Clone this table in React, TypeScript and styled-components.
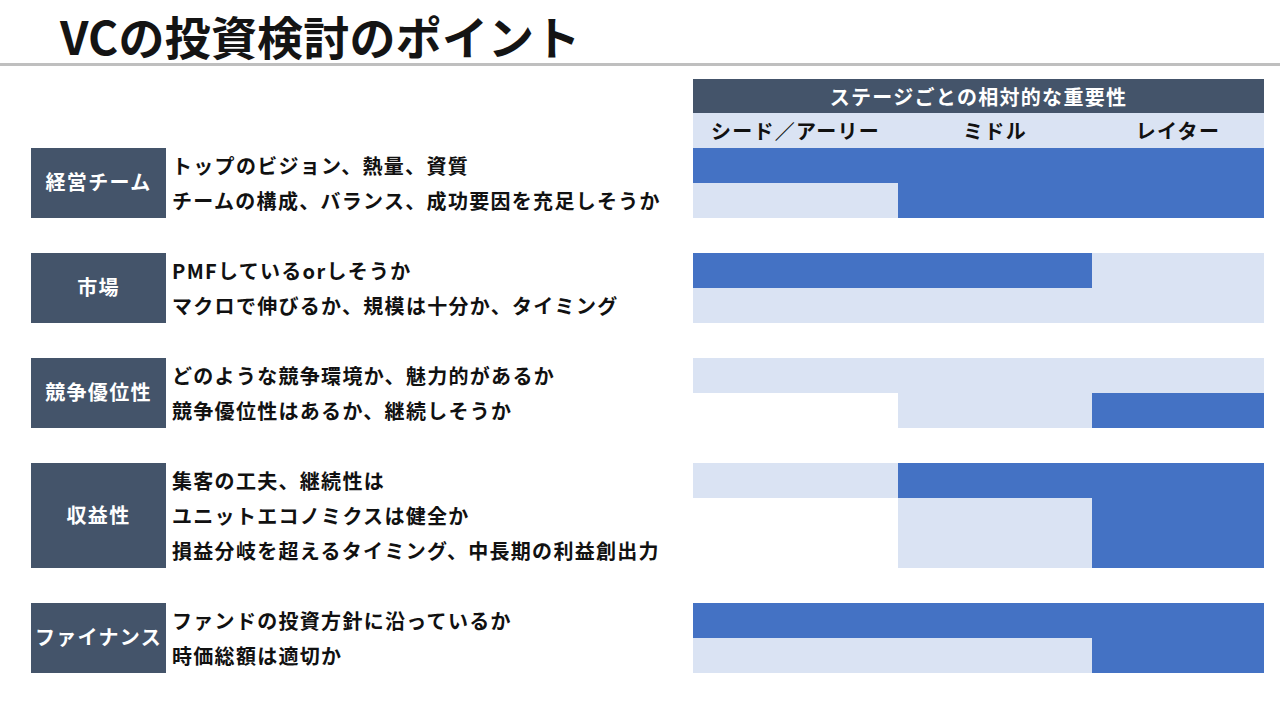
import React from "react";
import styled, { createGlobalStyle } from "styled-components";

const GlobalStyle = createGlobalStyle`
  html, body {
    margin: 0;
    padding: 0;
    background: #ffffff;
  }
  body {
    width: 1280px;
    height: 720px;
    overflow: hidden;
    font-family: "Noto Sans CJK JP", "Noto Sans", sans-serif;
    color: #111111;
  }
`;

const Page = styled.div`
  width: 1280px;
  height: 720px;
  display: flex;
  flex-direction: column;
`;

const TitleBar = styled.header`
  box-sizing: border-box;
  border-bottom: 3px solid #bfbfbf;
  height: 66px;
  display: flex;
  align-items: flex-end;
  padding: 0 0 2px 60px;
`;

const Title = styled.h1`
  margin: 0;
  font-size: 46px;
  line-height: 52px;
  font-weight: 700;
  letter-spacing: 0.2px;
  color: #141414;
`;

const Body = styled.main`
  display: flex;
  flex-direction: column;
  gap: 35px;
  padding: 13px 16px 0 31px;
`;

const Top = styled.section`
  display: grid;
  grid-template-columns: 662px 571px;
`;

const TableHead = styled.div`
  grid-column: 2;
  display: grid;
  grid-template-columns: 205px 194px 172px;
`;

const HeadTitle = styled.div`
  grid-column: 1 / -1;
  height: 34px;
  background: #44546a;
  color: #ffffff;
  display: flex;
  align-items: center;
  justify-content: center;
  font-size: 20px;
  font-weight: 700;
  letter-spacing: 1.3px;
`;

const StageCell = styled.div`
  height: 35px;
  background: #dae3f3;
  display: flex;
  align-items: center;
  justify-content: center;
  font-size: 20px;
  font-weight: 700;
  letter-spacing: 1.3px;
  color: #111111;
`;

const Group = styled.section<{ $rows: number }>`
  display: grid;
  grid-template-columns: 135px 527px 571px;
  grid-template-rows: repeat(${(p) => p.$rows}, 35px);
`;

const Label = styled.div<{ $rows: number }>`
  grid-column: 1;
  grid-row: 1 / span ${(p) => p.$rows};
  background: #44546a;
  color: #ffffff;
  display: flex;
  align-items: center;
  justify-content: center;
  padding-bottom: 3px;
  font-size: 20px;
  font-weight: 700;
  letter-spacing: 1.3px;
  white-space: nowrap;
`;

const Point = styled.div<{ $row: number }>`
  grid-column: 2;
  grid-row: ${(p) => p.$row};
  display: flex;
  align-items: center;
  padding-left: 6px;
  font-size: 20px;
  font-weight: 700;
  letter-spacing: 1.3px;
  white-space: nowrap;
  color: #111111;
`;

const BarRow = styled.div<{ $row: number }>`
  grid-column: 3;
  grid-row: ${(p) => p.$row};
  display: grid;
  grid-template-columns: 205px 194px 172px;
`;

type Level = "high" | "mid" | "none";

const levelColor: Record<Level, string> = {
  high: "#4472c4",
  mid: "#dae3f3",
  none: "transparent",
};

const Cell = styled.div<{ $level: Level }>`
  background: ${(p) => levelColor[p.$level]};
`;

type Item = { text: string; levels: Level[] };
type GroupData = { label: string; items: Item[] };

const groups: GroupData[] = [
  {
    label: "経営チーム",
    items: [
      { text: "トップのビジョン、熱量、資質", levels: ["high", "high", "high"] },
      { text: "チームの構成、バランス、成功要因を充足しそうか", levels: ["mid", "high", "high"] },
    ],
  },
  {
    label: "市場",
    items: [
      { text: "PMFしているorしそうか", levels: ["high", "high", "mid"] },
      { text: "マクロで伸びるか、規模は十分か、タイミング", levels: ["mid", "mid", "mid"] },
    ],
  },
  {
    label: "競争優位性",
    items: [
      { text: "どのような競争環境か、魅力的があるか", levels: ["mid", "mid", "mid"] },
      { text: "競争優位性はあるか、継続しそうか", levels: ["none", "mid", "high"] },
    ],
  },
  {
    label: "収益性",
    items: [
      { text: "集客の工夫、継続性は", levels: ["mid", "high", "high"] },
      { text: "ユニットエコノミクスは健全か", levels: ["none", "mid", "high"] },
      { text: "損益分岐を超えるタイミング、中長期の利益創出力", levels: ["none", "mid", "high"] },
    ],
  },
  {
    label: "ファイナンス",
    items: [
      { text: "ファンドの投資方針に沿っているか", levels: ["high", "high", "high"] },
      { text: "時価総額は適切か", levels: ["mid", "mid", "high"] },
    ],
  },
];

const stages = ["シード／アーリー", "ミドル", "レイター"];

function GroupBlock({ g }: { g: GroupData }) {
  return (
    <Group $rows={g.items.length}>
      <Label $rows={g.items.length}>{g.label}</Label>
      {g.items.map((it, i) => (
        <React.Fragment key={it.text}>
          <Point $row={i + 1}>{it.text}</Point>
          <BarRow $row={i + 1}>
            {it.levels.map((lv, j) => (
              <Cell key={j} $level={lv} />
            ))}
          </BarRow>
        </React.Fragment>
      ))}
    </Group>
  );
}

export default function App() {
  return (
    <Page>
      <GlobalStyle />
      <TitleBar>
        <Title>VCの投資検討のポイント</Title>
      </TitleBar>
      <Body>
        <div>
          <Top>
            <TableHead>
              <HeadTitle>ステージごとの相対的な重要性</HeadTitle>
              {stages.map((s) => (
                <StageCell key={s}>{s}</StageCell>
              ))}
            </TableHead>
          </Top>
          <GroupBlock g={groups[0]} />
        </div>
        {groups.slice(1).map((g) => (
          <GroupBlock key={g.label} g={g} />
        ))}
      </Body>
    </Page>
  );
}
